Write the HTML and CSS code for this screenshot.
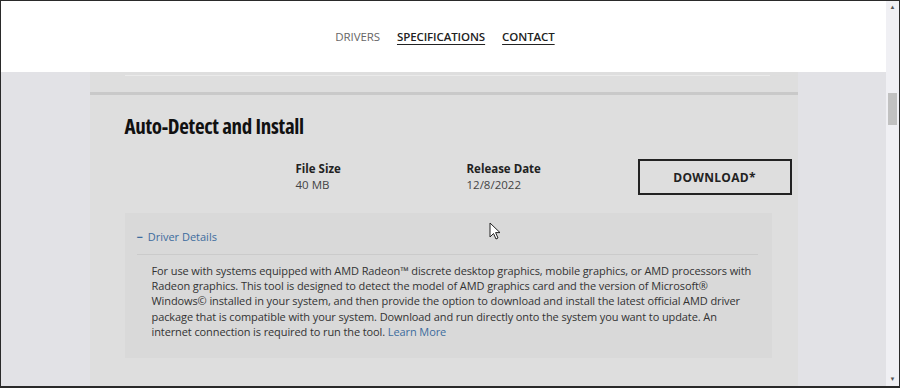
FILE: index.html
```
<!DOCTYPE html>
<html lang="en">
<head>
    <meta charset="UTF-8">
    <title>Auto-Detect and Install</title>
    <link rel="stylesheet" href="styles.css">
</head>
<body>
    <div class="window">
        <div class="page">
            <header class="top">
                <nav class="tabs">
                    <span class="tab current">DRIVERS</span>
                    <a class="tab" href="#">SPECIFICATIONS</a>
                    <a class="tab" href="#">CONTACT</a>
                </nav>
            </header>

            <main class="content">
                <div class="column">
                    <div class="prev-card"></div>
                    <div class="divider"></div>

                    <section class="driver">
                        <h2>Auto-Detect and Install</h2>

                        <div class="meta">
                            <div class="meta-item">
                                <div class="meta-label">File Size</div>
                                <div class="meta-value">40 MB</div>
                            </div>
                            <div class="meta-item">
                                <div class="meta-label">Release Date</div>
                                <div class="meta-value">12/8/2022</div>
                            </div>
                            <a class="btn-download" href="#">DOWNLOAD*</a>
                        </div>

                        <div class="details">
                            <div class="details-toggle"><span class="minus">&minus;</span> Driver Details</div>
                            <p class="details-text">For use with systems equipped with AMD Radeon™ discrete desktop graphics, mobile graphics, or AMD processors with Radeon graphics. This tool is designed to detect the model of AMD graphics card and the version of Microsoft® Windows© installed in your system, and then provide the option to download and install the latest official AMD driver package that is compatible with your system. Download and run directly onto the system you want to update. An internet connection is required to run the tool. <a href="#">Learn More</a></p>
                        </div>
                    </section>
                </div>
            </main>

            <svg class="cursor" width="12" height="19" viewBox="0 0 12 19">
                <path d="M1 1 L1 15 L4.5 11.5 L7 17 L9 16 L6.6 10.6 L11 10.6 Z" fill="#fff" stroke="#222" stroke-width="1"/>
            </svg>
        </div>

        <div class="scrollbar">
            <span class="arrow">&#9650;</span>
            <div class="track"><div class="thumb"></div></div>
            <span class="arrow">&#9660;</span>
        </div>
    </div>
</body>
</html>
```

FILE: styles.css
```
* { box-sizing: border-box; }
html, body { margin: 0; padding: 0; }
body { width: 900px; height: 388px; overflow: hidden; font-family: "Open Sans", Arial, sans-serif; color: #333; }

.window { display: flex; width: 900px; height: 388px; border: 1px solid #2a2a2a; border-bottom-width: 2px; background: #e2e2e6; }
.page { flex: 1; display: flex; flex-direction: column; position: relative; overflow: hidden; }

.top { height: 71px; background: #fff; display: flex; justify-content: center; align-items: center; flex-shrink: 0; padding-left: 3px; }
.tabs { display: flex; gap: 17px; font-size: 11.5px; font-stretch: 90%; font-weight: 600; letter-spacing: -0.1px; }
.tab { color: #222; text-decoration: underline; text-underline-offset: 3px; }
.tab.current { color: #666; text-decoration: none; font-weight: 500; }

.content { flex: 1; display: flex; justify-content: center; }
.column { width: 708px; background: #dedede; padding: 0 26px 0 35px; display: flex; flex-direction: column; }
.prev-card { height: 4px; border-bottom: 1px solid #eaeaea; margin-right: 2px; }
.divider { height: 3px; margin: 16px -26px 0 -35px; background: #c9c9c9; }

.driver { padding-top: 18px; }
.driver h2 { margin: 0; font-family: "Open Sans", sans-serif; font-stretch: 75%; font-size: 21px; font-weight: 700; color: #111; letter-spacing: -0.3px; line-height: 26px; }

.meta { display: flex; align-items: flex-start; margin-top: 22px; padding-left: 171px; }
.meta-item { width: 171px; flex-shrink: 0; font-size: 11.5px; line-height: 16px; }
.meta-label { font-weight: 700; color: #222; }
.meta-value { color: #444; }
.btn-download { width: 154px; height: 36px; flex-shrink: 0; margin-top: -2px; border: 2px solid #222; display: flex; align-items: center; justify-content: center; font-size: 12px; font-weight: 700; color: #222; text-decoration: none; letter-spacing: 0.3px; }

.details { margin-top: 18px; background: #d9d9d9; padding: 13px 14px 19px 12px; }
.details-toggle { font-size: 11px; color: #3d6c9e; line-height: 22px; padding-bottom: 6px; border-bottom: 1px solid #cbcbcb; }
.minus { font-weight: 700; margin-right: 2px; }
.details-text { margin: 8px 0 0 15px; font-size: 11px; font-stretch: 90%; letter-spacing: -0.1px; line-height: 15.2px; color: #333; }
.details-text a { color: #3d6c9e; text-decoration: none; }

.cursor { position: absolute; left: 488px; top: 221px; }

.scrollbar { width: 13px; background: #f0f0f4; display: flex; flex-direction: column; align-items: center; }
.arrow { font-size: 6px; color: #555; height: 13px; line-height: 13px; }
.track { flex: 1; width: 100%; position: relative; }
.thumb { width: 9px; height: 32px; margin: 79px auto 0; background: #c1c1c1; }
```
